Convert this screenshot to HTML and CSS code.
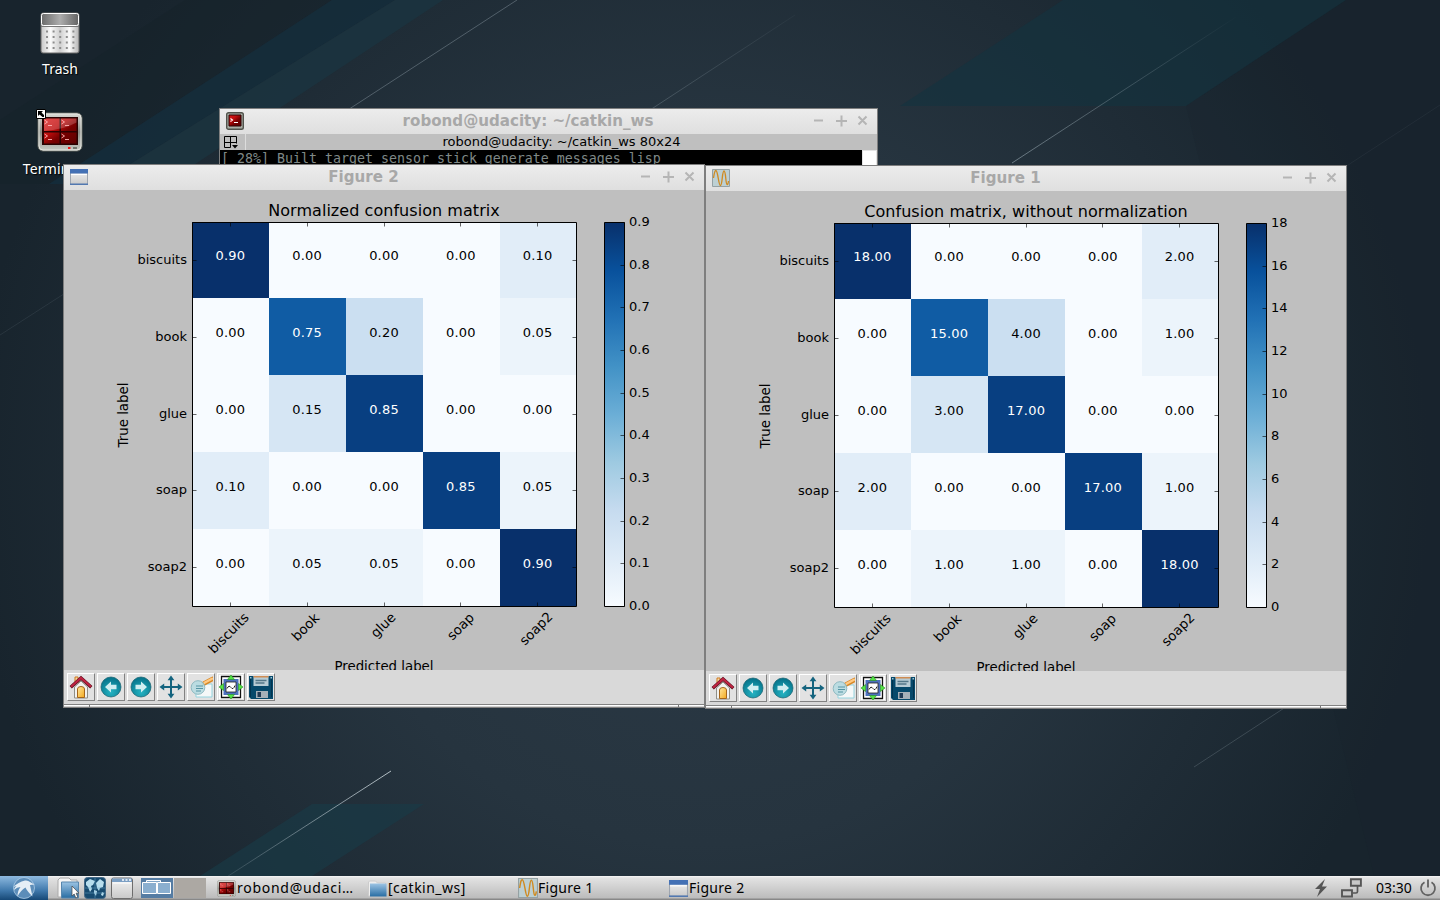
FILE: index.html
```html
<!DOCTYPE html>
<html lang="en">
<head>
<meta charset="utf-8">
<title>Desktop</title>
<link rel="stylesheet" href="styles.css">
</head>
<body>
<svg class="defs" width="0" height="0" aria-hidden="true">
  <defs>
    <linearGradient id="blues" x1="0" y1="1" x2="0" y2="0">
      <stop offset="0" stop-color="#f7fbff"/><stop offset=".125" stop-color="#deebf7"/><stop offset=".25" stop-color="#c6dbef"/><stop offset=".375" stop-color="#9ecae1"/><stop offset=".5" stop-color="#6baed6"/><stop offset=".625" stop-color="#4292c6"/><stop offset=".75" stop-color="#2171b5"/><stop offset=".875" stop-color="#08519c"/><stop offset="1" stop-color="#08306b"/>
    </linearGradient>
    <linearGradient id="red" x1="0" y1="0" x2="1" y2="1"><stop offset="0" stop-color="#dd1c1c"/><stop offset=".35" stop-color="#c00d0d"/><stop offset=".6" stop-color="#780000"/><stop offset="1" stop-color="#5c0000"/></linearGradient>
    <linearGradient id="metal" x1="0" y1="0" x2="0" y2="1"><stop offset="0" stop-color="#dcdcd8"/><stop offset=".5" stop-color="#8a8c86"/><stop offset="1" stop-color="#c8cac4"/></linearGradient>
    <linearGradient id="can" x1="0" x2="1"><stop offset="0" stop-color="#c6c6c6"/><stop offset=".25" stop-color="#fafafa"/><stop offset=".5" stop-color="#cfcfcf"/><stop offset=".75" stop-color="#fafafa"/><stop offset="1" stop-color="#b4b4b4"/></linearGradient>
    <linearGradient id="lid" x1="0" x2="1"><stop offset="0" stop-color="#6b6b6b"/><stop offset=".5" stop-color="#adadad"/><stop offset="1" stop-color="#646464"/></linearGradient>
    <radialGradient id="ball" cx=".5" cy=".75" r=".7"><stop offset="0" stop-color="#25b3c2"/><stop offset="1" stop-color="#06748b"/></radialGradient>
    <linearGradient id="folder" x1="0" y1="0" x2="0" y2="1"><stop offset="0" stop-color="#9cc4e4"/><stop offset="1" stop-color="#286da3"/></linearGradient>
    <linearGradient id="door" x1="0" y1="0" x2="1" y2="1"><stop offset="0" stop-color="#ffe7a0"/><stop offset="1" stop-color="#f3a91d"/></linearGradient>
    <linearGradient id="page" x1="0" y1="0" x2="0" y2="1"><stop offset="0" stop-color="#f4f4f4"/><stop offset="1" stop-color="#c9c9c9"/></linearGradient>

    <symbol id="i-home" viewBox="0 0 24 24">
      <path d="M6 9V2h3v6" fill="#f6d9a4" stroke="#d07b20"/>
      <path d="M5.500 12L12 6l6.500 6v11h-13z" fill="#f2f2ef" stroke="#8e8e88"/>
      <path d="M8.500 22.500V14q0-2.500 3.500-2.500t3.500 2.500v8.500z" fill="url(#door)" stroke="#a4651c"/>
      <path d="M1.700 12.300L12 3l10.300 9.300" fill="none" stroke="#5e1020" stroke-width="3.400"/>
      <path d="M2 11.800L12 2.900l10 8.900" fill="none" stroke="#bf2442" stroke-width="2"/>
    </symbol>
    <symbol id="i-back" viewBox="0 0 24 24">
      <circle cx="12" cy="12" r="10" fill="url(#ball)" stroke="#14606f" stroke-width=".7"/>
      <path d="M6 12l6-5.500v3.200h5.500v4.600H12v3.200z" fill="#d0eef1"/>
    </symbol>
    <symbol id="i-forward" viewBox="0 0 24 24">
      <circle cx="12" cy="12" r="10" fill="url(#ball)" stroke="#14606f" stroke-width=".7"/>
      <path d="M18 12l-6-5.500v3.200H6.500v4.600H12v3.200z" fill="#d0eef1"/>
    </symbol>
    <symbol id="i-move" viewBox="0 0 24 24">
      <path d="M12 3v18M3 12h18" stroke="#15647f" stroke-width="2"/>
      <path d="M12 .5l3.400 4.700H8.600zM12 23.500l3.400-4.700H8.600zM.5 12l4.700-3.400v6.800zM23.500 12l-4.700-3.400v6.800z" fill="#15647f"/>
    </symbol>
    <symbol id="i-zoom" viewBox="0 0 24 24">
      <path d="M7 9h16v13H7z" fill="#f5f8f8" stroke="#94d4df"/>
      <path d="M15 8.500L23.500 4" stroke="#d88928" stroke-width="4.600" stroke-linecap="round"/>
      <path d="M15.500 7.800L23 3.700" stroke="#ffc983" stroke-width="2.400" stroke-linecap="round"/>
      <circle cx="9" cy="12.500" r="6.800" fill="#b8dbe1" fill-opacity=".92" stroke="#8db9c1"/>
      <path d="M7 11h7M7 13.500h7M7 16h5" stroke="#5494a3" stroke-width="1.200"/>
    </symbol>
    <symbol id="i-subplots" viewBox="0 0 24 24">
      <path d="M-2-2h28v28H-2z" fill="#fff"/>
      <path d="M2.500 1.500h19v21h-19z" fill="#fff" stroke="#111" stroke-width="1.300"/>
      <path d="M4.500 4h15v16h-15z" fill="#4d70bd"/>
      <path d="M7 7h10v10H7z" fill="#fff" stroke="#222" stroke-width=".8"/>
      <path d="M8 13.500q2-4 4-1t4-2" fill="none" stroke="#222"/>
      <path d="M12 0l3.500 4.500h-7zM12 24l3.500-4.500h-7zM0 12l4.500-3.500v7zM24 12l-4.500-3.500v7z" fill="#54e445" stroke="#248b22" stroke-width=".6"/>
    </symbol>
    <symbol id="i-save" viewBox="0 0 24 24">
      <path d="M0 1h24v23H2l-2-2z" fill="#06496b"/>
      <path d="M1.500 2v20M22.500 2v20" stroke="#02344f"/>
      <path d="M4.500 1h15v10h-15z" fill="#b7cbd4"/><path d="M4.500 1h15v1.500h-15z" fill="#cf8c53"/>
      <path d="M6.500 5.500h11M6.500 8h9" stroke="#547788" stroke-width="1.400"/>
      <path d="M7 16h12v7H7z" fill="#a6b0b8"/><path d="M8.500 17H12v5H8.500z" fill="#213b55"/>
      <path d="M1 2h1.500v1.500H1zM21.500 2H23v1.500h-1.500z" fill="#9cc5d8"/>
    </symbol>
    <symbol id="i-window" viewBox="0 0 18 16">
      <path d="M.5.500h17v15H.5z" fill="url(#page)" stroke="#9ea5af"/><path d="M0 0h18v4.500H0z" fill="#4471b5"/><path d="M0 14.500h18V16H0z" fill="#5278b0"/><path d="M1 5.500h16" stroke="#fff"/>
    </symbol>
    <symbol id="i-plot" viewBox="0 0 18 18">
      <path d="M.5.500h17v17H.5z" fill="#bdd0d3" stroke="#95a1a3"/>
      <path d="M1.500 9C2.500 2 3 1.500 3.800 1.500C6 1.500 6.500 16.500 8.400 16.500C10.500 16.500 10 2 12 2C14 2 13.500 14.500 15 15.500Q16 16 16.500 12" fill="none" stroke="#d08a20" stroke-width="1.300"/>
    </symbol>
    <symbol id="i-term" viewBox="0 0 18 18">
      <rect x=".7" y=".7" width="16.600" height="16.600" rx="1.800" fill="#aaaea5" stroke="#50534c" stroke-width="1.400"/>
      <path d="M3 3h12v11H3z" fill="url(#red)" stroke="#2b0505"/><path d="M4.500 6.500l2 1.500-2 1.500M8 10.500h4" stroke="#fff" stroke-width="1.100" fill="none"/>
    </symbol>
    <symbol id="i-terminator" viewBox="0 0 46 40">
      <rect x="1" y="1" width="44" height="38" rx="5" fill="url(#metal)" stroke="#61645e"/>
      <rect x="2" y="2" width="42" height="36" rx="4" fill="none" stroke="#e4e5e0"/>
      <path d="M5 5h36v28H5z" fill="#2a0202"/>
      <path d="M7 6.500h15.500v12.500H7zM24 6.500h15.500v12.500H24zM7 20.500h15.500V31.500H7zM24 20.500h15.500V31.500H24z" fill="url(#red)"/>
      <path d="M7 6.500h32.500v4Q26 18 7 19z" fill="#fff" opacity=".2"/>
      <path d="M7.500 8l3 2-3 2M11 13.500h4M24.500 8l3 2-3 2M28 13.500h4M7.500 22l3 2-3 2M11 27.500h4M24.500 22l3 2-3 2M28 27.500h4" fill="none" stroke="#ffb4b4" stroke-width=".9"/>
      <path d="M31 35h2.500v2H31z" fill="#f01818"/><path d="M36 35h4v2h-4z" fill="#73776f"/>
    </symbol>
    <symbol id="i-controls" viewBox="0 0 56 12">
      <path d="M1 5.500h9M23 6h11M28.500.5v11M45.500 1.500l8 8M53.500 1.500l-8 8" fill="none" stroke="#b5b5b5" stroke-width="2"/>
    </symbol>
  </defs>
</svg>

<main class="desktop">
  <svg class="wallpaper" viewBox="0 0 1440 900" aria-hidden="true">
    <defs>
      <radialGradient id="sky" gradientUnits="userSpaceOnUse" cx="700" cy="480" r="730"><stop offset="0" stop-color="#2c3a46"/><stop offset=".5" stop-color="#26343f"/><stop offset="1" stop-color="#18242d"/></radialGradient>
      <linearGradient id="streak" gradientUnits="userSpaceOnUse" x1="1012" y1="163" x2="1239" y2="15"><stop offset="0" stop-color="#9aabb4" stop-opacity=".6"/><stop offset="1" stop-color="#9aabb4" stop-opacity="0"/></linearGradient>
      <linearGradient id="streak2" gradientUnits="userSpaceOnUse" x1="650" y1="110" x2="795" y2="15"><stop offset="0" stop-color="#9aabb4" stop-opacity=".3"/><stop offset="1" stop-color="#9aabb4" stop-opacity=".05"/></linearGradient>
      <linearGradient id="streak3" gradientUnits="userSpaceOnUse" x1="391" y1="771" x2="222" y2="880"><stop offset="0" stop-color="#b4c0c6"/><stop offset="1" stop-color="#9aabb4" stop-opacity=".15"/></linearGradient>
    </defs>
    <path d="M0 0h1440v900H0z" fill="url(#sky)"/>
    <path d="M185 0h147L49 184H0V120z" fill="#16222a" opacity=".55"/>
    <path d="M332 0h63L98 184H49z" fill="#142d3b" opacity=".85"/>
    <path d="M395 0h48L165 184H98z" fill="#1b3440" opacity=".85"/>
    <path d="M1063 0h283l-160 106H900z" fill="#14323f" opacity=".65"/>
    <path d="M1346 0h94v900h-60L1186 106z" fill="#17222b" opacity=".2"/>
    <path d="M312 804h112L312 876H200z" fill="#193a47" opacity=".65"/>
    <g fill="none" stroke="#9aabb4">
      <path d="M391 771L222 880" stroke="url(#streak3)"/><path d="M517 0L340 115" opacity=".4"/><path d="M1239 15L1012 163" stroke="url(#streak)"/><path d="M1347 667l-153 100" opacity=".25"/><path d="M795 15L650 110" stroke="url(#streak2)"/><path d="M70 290L0 335" opacity=".12"/><path d="M1440 105l-95 62" opacity=".08"/>
    </g>
  </svg>

  <div class="launcher launcher-trash">
    <svg class="trash" viewBox="0 0 40 42"><rect x="1" y="1" width="38" height="40" rx="2" fill="url(#can)" stroke="#686868"/><rect x="1.500" y="1.500" width="37" height="12" rx="2" fill="url(#lid)" stroke="#fff"/><path d="M1 14.500h38" stroke="#777"/><path d="M6 19.500h29M6 25h29M6 30.500h29M6 36h29" stroke="#8d8d8d" stroke-width="2" stroke-dasharray="2 4.600"/></svg>
    <span>Trash</span>
  </div>
  <div class="launcher launcher-term">
    <svg class="term-icon"><use href="#i-terminator"/></svg>
    <span>Terminator</span>
    <svg class="shortcut" viewBox="0 0 10 10"><path d="M.5.500h9v9h-9z" fill="#fff" stroke="#000"/><path d="M2 2h5L5.500 3.500 8 6v2H6.500L3.500 5.500 2 7z" fill="#000"/></svg>
  </div>

  <section class="window terminal">
    <header class="titlebar"><svg class="app-icon"><use href="#i-term"/></svg><h2>robond@udacity: ~/catkin_ws</h2><svg class="controls"><use href="#i-controls"/></svg></header>
    <div class="subbar"><svg class="split" viewBox="0 0 14 14"><path d="M.5 1.500h12v7M.5 1.500v11h6M6.500 1.500v11M.5 7.500h12" fill="none" stroke="#000"/><path d="M8 10h6l-3 3.500z"/></svg><span>robond@udacity: ~/catkin_ws 80x24</span></div>
    <div class="console"><pre>[ 28%] Built target sensor_stick_generate_messages_lisp</pre><i class="scroll"></i></div>
  </section>

  <section class="window figure figure-2" data-kind="normalized"></section>
  <section class="window figure figure-1" data-kind="counts"></section>
</main>

<footer class="taskbar">
  <div class="start"><svg viewBox="0 0 24 22"><circle cx="12" cy="11" r="10.500" fill="#5c8db9" stroke="#b7d4eb" stroke-width=".7"/><path d="M1.500 10Q6 5 13 3.500q3-.5 5 1.500l4.500 2.500-4.500.5q1 5 2.500 11.500Q15 14 13.500 10.500 9 13 5.500 19.500q0-6 3-9.500Q5 10 2 13q0-2 2.500-4z" fill="#e5eef6"/></svg></div>
  <div class="quick">
    <svg class="q1" viewBox="0 0 22 22"><path d="M1 20V3l2-2h9l2 2h6v17z" fill="#f5f5f5" stroke="#aaa"/><path d="M4.500 5h17v16h-17z" fill="url(#folder)" stroke="#5686ad"/><path d="M15 9v10l2.200-2 1.600 4 2-1-1.700-3.800H22z" fill="#fff" stroke="#444" stroke-width=".7"/></svg>
    <svg class="q2" viewBox="0 0 22 22"><rect x=".5" y=".5" width="21" height="21" rx="3" fill="#174b70" stroke="#456986"/><path d="M2 5l4-3 5 2-2 4-2 1 1 3-2 3-2-5-2-2zM12 6l4-4 4 3-1 5-3 1-1 3-2-3zM10 13l3 1-1 5-2-3zM18 15l2 1-1 3-2-1z" fill="#b7dded"/><path d="M1 11h20M11 1v20M1 16h20" stroke="#6fa7c6" opacity=".5"/></svg>
    <svg class="q3" viewBox="0 0 22 22"><rect x=".5" y="1" width="21" height="20.500" rx="2" fill="url(#page)" stroke="#6d6d6d"/><path d="M1 1.500h20V5H1z" fill="#7b9fc4"/><path d="M11 3h2M14.500 3h2M18 3h2" stroke="#fff" stroke-width="1.500"/><path d="M2 6h18" stroke="#fff"/></svg>
  </div>
  <div class="pager"><svg viewBox="0 0 32 20"><path d="M0 0h32v20H0z" fill="#557ca3"/><path d="M5.500 2.500h14v12h-14z" fill="#81a6c8" stroke="#fff"/><path d="M1.500 4.500h14v11h-14zM16.500 4.500h13v11h-13z" fill="#8bafcf" stroke="#fff"/></svg><i></i></div>
  <nav class="tasks">
    <div class="task"><svg class="wide" viewBox="0 0 46 40" preserveAspectRatio="none"><use href="#i-terminator" width="46" height="40"/></svg><span class="t1">robond@udaci…</span></div>
    <div class="task"><svg class="wide" viewBox="0 0 19 17" preserveAspectRatio="none"><path d="M.5 16V2l1-1h6l2 2h8v13z" fill="#eee" stroke="#ccc"/><path d="M2 3.500h16.500V16.500H2z" fill="url(#folder)"/></svg><span class="t2">[catkin_ws]</span></div>
    <div class="task"><svg class="plot"><use href="#i-plot"/></svg><span class="t3">Figure 1</span></div>
    <div class="task"><svg class="wide" viewBox="0 0 18 16" preserveAspectRatio="none"><use href="#i-window" width="18" height="16"/></svg><span class="t3">Figure 2</span></div>
  </nav>
  <div class="tray">
    <svg class="bolt" viewBox="0 0 12 18"><path d="M10 0L0 10h5L2 18 12 7.500H7z" fill="#555"/></svg>
    <svg class="net" viewBox="0 0 21 21"><path d="M9.900 1.200h10v6.600h-10zM1 12.200h10v6.300H1z" fill="#c8c8c8" stroke="#565656" stroke-width="1.900"/><path d="M16.500 8v5.500q0 1.500-1.500 1.500h-3" fill="none" stroke="#565656" stroke-width="1.700"/></svg>
    <time>03:30</time>
    <svg class="power" viewBox="0 0 18 18"><path d="M5.500 3.200a7 7 0 1 0 7 0M9 .5v8" fill="none" stroke="#626262" stroke-width="1.800"/></svg>
  </div>
</footer>
<script src="charts.js"></script>
</body>
</html>
```

FILE: styles.css
```css
* { box-sizing: border-box; }
body { margin: 0; width: 1440px; height: 900px; overflow: hidden; display: flex; flex-direction: column; background: #1b2730; font-family: "DejaVu Sans", sans-serif; }
svg { display: block; flex: none; }
.defs { position: absolute; }
.desktop { position: relative; height: 876px; overflow: hidden; }
.wallpaper { width: 1440px; height: 900px; }

.launcher { position: absolute; display: flex; flex-direction: column; align-items: center; width: 100px; left: 10px; color: #fff; font: 14px/18px "Noto Sans", sans-serif; text-shadow: 1px 1px 1px #000; }
.launcher-trash { top: 12px; }
.launcher-term { top: 112px; }
.trash { width: 40px; height: 42px; margin-bottom: 6px; }
.term-icon { width: 46px; height: 40px; margin-bottom: 8px; }
.launcher-term span { letter-spacing: .15px; }
.shortcut { position: absolute; left: 26px; top: -3px; width: 10px; height: 10px; }

.window { position: absolute; border: 1px solid #7e7e7e; background: #bfbfbf; overflow: hidden; }
.titlebar { display: flex; align-items: center; height: 25px; padding: 0 8px 1px 6px; background: linear-gradient(#ececec, #dfdfdf); }
.titlebar h2 { flex: 1; margin: 0; padding-right: 1px; text-align: center; font: bold 15.1px/22px "DejaVu Sans", sans-serif; color: #a8a8a8; }
.app-icon { width: 18px; height: 18px; }
.controls { width: 56px; height: 12px; }

.terminal { left: 219px; top: 108px; width: 659px; height: 100px; }
.subbar { display: flex; align-items: center; height: 16px; font-size: 13px; line-height: 16px; padding-left: 4px; }
.split { width: 14px; height: 14px; }
.subbar span { flex: 1; margin-left: 7px; border-left: 1px solid #ddd; text-align: center; }
.console { display: flex; height: 60px; background: #000; color: #7f8887; }
.console pre { flex: 1; margin: 0; padding-left: 1px; font: 13.29px/17px "DejaVu Sans Mono", monospace; }
.scroll { width: 15px; background: #fff; border: 1px solid #e4e4e4; }

.figure { width: 642px; height: 544px; }
.figure-2 { left: 63px; top: 164px; }
.figure-1 { left: 705px; top: 165px; }
.chart { width: 640px; height: 480px; font: 13px "DejaVu Sans", sans-serif; }
.chart .title { font-size: 16px; letter-spacing: .05px; }
.chart .cell { letter-spacing: .2px; }
.chart .axis { font-size: 13.33px; }
.toolbar { display: flex; gap: 2px; height: 34px; padding: 3px; background: #d9d9d9; }
.tool { width: 28px; height: 28px; display: grid; place-items: center; background: #e2e2e2; border: 1px solid; border-color: #fff #828282 #828282 #fff; }
.tool svg { width: 24px; height: 24px; }
.status { display: flex; justify-content: space-between; height: 3px; padding: 0 25px; border-top: 1px solid #828282; background: linear-gradient(#fff 1px, #d0d0d0 1px); }
.status i { width: 1px; background: #777; }

.taskbar { display: flex; align-items: center; height: 24px; background: linear-gradient(#f7f7f7 0, #e2e2e2 2px, #bcbcbc 22px, #888 23px); font: 14px/22px "Noto Sans", sans-serif; color: #000; }
.start { width: 48px; height: 24px; padding: 1px 12px; background: linear-gradient(#8ebae0, #4079ac 60%, #164876); }
.start svg { width: 24px; height: 22px; }
.quick { display: flex; gap: 5px; padding-left: 9px; }
.quick svg { width: 22px; height: 22px; }
.pager { display: flex; padding-left: 8px; }
.pager svg { width: 32px; height: 20px; }
.pager i { width: 32px; height: 20px; margin-left: 1px; background: #aca8a3; }
.tasks { display: grid; grid-template-columns: 151px 150px 151px 151px; padding-left: 11px; }
.task { display: flex; align-items: center; gap: 1px; }
.task .wide { width: 19px; height: 17px; }
.task .plot { width: 20px; height: 20px; margin-right: -1px; }
.task span { white-space: nowrap; }
.t1 { letter-spacing: .72px; }
.t2 { letter-spacing: .48px; }
.t3 { letter-spacing: .28px; }
.tray { display: flex; align-items: center; margin-left: auto; padding-right: 3px; }
.bolt { width: 12px; height: 18px; margin-right: 14px; }
.net { width: 21px; height: 21px; margin-right: 14px; }
.tray time { width: 38px; white-space: nowrap; margin-right: 5px; }
.power { width: 18px; height: 18px; }
```

FILE: charts.js
```js
const BLUES = [[247,251,255],[222,235,247],[198,219,239],[158,202,225],[107,174,214],[66,146,198],[33,113,181],[8,81,156],[8,48,107]];
const LABELS = ['biscuits', 'book', 'glue', 'soap', 'soap2'];
const COUNTS = [[18,0,0,0,2],[0,15,4,0,1],[0,3,17,0,0],[2,0,0,17,1],[0,1,1,0,18]];
const X_LABEL_CENTERS = [[165,443.500],[242,437.500],[319.500,435.500],[397,437],[472.500,439]];
const TOOLS = ['home', 'back', 'forward', 'move', 'zoom', 'subplots', 'save'];
const LEFT = 128.500, TOP = 32.500, SIZE = 384, CELL = SIZE / 5;

function blue(t) {
  const p = t * 8, i = Math.min(7, Math.floor(p));
  return `rgb(${BLUES[i].map((c, k) => Math.round(c + (BLUES[i + 1][k] - c) * (p - i))).join(',')})`;
}

function chart(normalized) {
  let cells = '', texts = '', ticks = '', bar = '';
  COUNTS.forEach((row, r) => row.forEach((n, c) => {
    const x0 = Math.ceil(128 + c * CELL), x1 = Math.ceil(128 + (c + 1) * CELL);
    const y0 = Math.round(31.600 + r * CELL), y1 = Math.round(31.600 + (r + 1) * CELL);
    cells += `<rect x="${x0}" y="${y0}" width="${x1 - x0}" height="${y1 - y0}" fill="${blue(n / 18)}" shape-rendering="crispEdges"/>`;
    texts += `<text class="cell" x="${166.400 + c * CELL}" y="${Math.round(70 + r * (CELL + .2))}" text-anchor="middle" fill="${n > 9 ? '#fff' : '#000'}">${(normalized ? n / 20 : n).toFixed(2)}</text>`;
  }));
  LABELS.forEach((name, i) => {
    const p = Math.floor((i + .5) * CELL), x = LEFT + p, y = TOP + p;
    ticks += `M${x} ${TOP}v4M${x} ${TOP + SIZE}v-4M${LEFT} ${y}h4M${LEFT + SIZE} ${y}h-4`;
    const [cx, cy] = X_LABEL_CENTERS[i];
    texts += `<text x="123" y="${74 + i * CELL}" text-anchor="end">${name}</text>`;
    texts += `<text class="axis" transform="translate(${cx} ${cy}) rotate(-45)" y="4" text-anchor="middle">${name}</text>`;
  });
  for (let i = 0; i <= 9; i++) {
    const y = TOP + Math.round(SIZE * (1 - i / 9));
    ticks += `M560.500 ${y}h-4`;
    bar += `<text x="565" y="${y + 3.500}">${normalized ? (i / 10).toFixed(1) : i * 2}</text>`;
  }
  return `<svg class="chart" viewBox="0 0 640 480">${cells}
    <rect x="540.500" y="32.500" width="20" height="384" fill="url(#blues)"/>
    <path d="${ticks}" stroke="#000" stroke-width=".6"/>
    <path d="M128.500 32.500h384v384h-384zM540.500 32.500h20v384h-20z" fill="none" stroke="#000"/>
    ${texts}${bar}
    <text class="title" x="320" y="26" text-anchor="middle">${normalized ? 'Normalized confusion matrix' : 'Confusion matrix, without normalization'}</text>
    <text class="axis" transform="translate(63.500 225) rotate(-90)" text-anchor="middle">True label</text>
    <text class="axis" x="320" y="481" text-anchor="middle">Predicted label</text></svg>`;
}

document.querySelectorAll('.figure').forEach(win => {
  const normalized = win.dataset.kind === 'normalized';
  const tools = TOOLS.map(t => `<div class="tool"><svg><use href="#i-${t}"/></svg></div>`).join('');
  win.innerHTML = `<header class="titlebar"><svg class="app-icon"><use href="#i-${normalized ? 'window' : 'plot'}"/></svg><h2>Figure ${normalized ? 2 : 1}</h2><svg class="controls"><use href="#i-controls"/></svg></header>
    ${chart(normalized)}<div class="toolbar">${tools}</div><div class="status"><i></i><i></i></div>`;
});
```
